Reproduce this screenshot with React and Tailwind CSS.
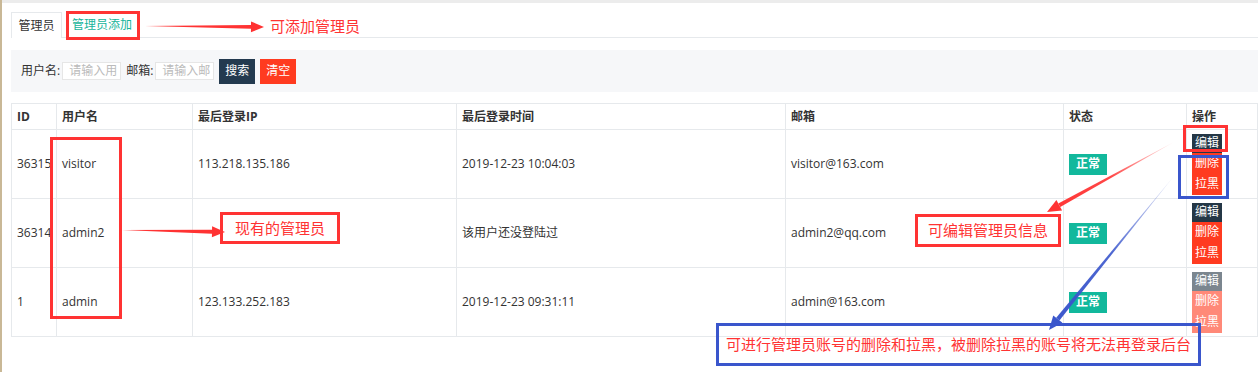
const rows = [
  { id: "36315", name: "visitor", ip: "113.218.135.186", time: "2019-12-23 10:04:03", email: "visitor@163.com", off: false },
  { id: "36314", name: "admin2", ip: "", time: "该用户还没登陆过", email: "admin2@qq.com", off: false },
  { id: "1", name: "admin", ip: "123.133.252.183", time: "2019-12-23 09:31:11", email: "admin@163.com", off: true },
];

const Arrow = ({ x1, y1, x2, y2, color, head = 12, fade }) => {
  const a = Math.atan2(y2 - y1, x2 - x1);
  const bx = x2 - head * Math.cos(a);
  const by = y2 - head * Math.sin(a);
  const w = head * 0.42;
  const px = -Math.sin(a) * w;
  const py = Math.cos(a) * w;
  const id = `g${x1}${y1}`;
  return (
    <g>
      {fade && (
        <defs>
          <linearGradient id={id} gradientUnits="userSpaceOnUse" x1={x1} y1={y1} x2={x2} y2={y2}>
            <stop offset="0" stopColor={color} stopOpacity="0.1" />
            <stop offset="0.5" stopColor={color} stopOpacity="0.9" />
            <stop offset="1" stopColor={color} />
          </linearGradient>
        </defs>
      )}
      <polygon
        points={`${x1},${y1} ${bx + px * 0.35},${by + py * 0.35} ${bx - px * 0.35},${by - py * 0.35}`}
        fill={fade ? `url(#${id})` : color}
      />
      <polygon points={`${x2},${y2} ${bx + px},${by + py} ${bx - px},${by - py}`} fill={color} />
    </g>
  );
};

const Th = ({ children }) => (
  <th className="h-[26px] border border-[#e6e9ec] px-[5px] text-left text-[12px] font-bold text-[#333]">
    {children}
  </th>
);

const Td = ({ children }) => (
  <td className="h-[69px] border border-[#e6e9ec] px-[5px] text-[12px] text-[#333]">{children}</td>
);

export default function App() {
  return (
    <div className="relative h-[372px] w-[1258px] overflow-hidden border-l-2 border-[#c9b896] bg-white font-['Open_Sans','Noto_Sans_CJK_SC',sans-serif] text-[#333]">
      <div className="h-[3px] bg-[#ececec]" />
      <div className="pl-[9px] pt-[9px]">
        <div className="flex h-[26px] border-b border-[#e6e9ec]">
          <div className="-mb-px flex w-[51px] items-center justify-center border border-b-0 border-[#e6e9ec] bg-white text-[12px]">
            管理员
          </div>
          <div className="flex items-center px-[10px] text-[12px] text-[#16b49a]">管理员添加</div>
        </div>

        <div className="mt-[12px] flex h-[42px] items-center bg-[#f6f7f9] pl-[10px] text-[12px]">
          <span>用户名:</span>
          <div className="ml-[2px] flex h-[18px] w-[59px] items-center border border-[#e6e6e6] bg-white pl-[6px] text-[12px] text-[#bbb]">
            请输入用
          </div>
          <span className="ml-[5px]">邮箱:</span>
          <div className="ml-[2px] flex h-[18px] w-[59px] items-center border border-[#e6e6e6] bg-white pl-[6px] text-[12px] text-[#bbb]">
            请输入邮
          </div>
          <div className="ml-[5px] flex h-[25px] w-[36px] items-center justify-center bg-[#233a4f] text-[12px] text-white">
            搜索
          </div>
          <div className="ml-[5px] flex h-[25px] w-[36px] items-center justify-center bg-[#ff3b20] text-[12px] text-white">
            清空
          </div>
        </div>

        <table className="mt-[11px] w-[1246px] table-fixed border-collapse">
          <colgroup>
            <col className="w-[45px]" />
            <col className="w-[136px]" />
            <col className="w-[264px]" />
            <col className="w-[329px]" />
            <col className="w-[278px]" />
            <col className="w-[123px]" />
            <col className="w-[71px]" />
          </colgroup>
          <thead>
            <tr>
              <Th>ID</Th>
              <Th>用户名</Th>
              <Th>最后登录IP</Th>
              <Th>最后登录时间</Th>
              <Th>邮箱</Th>
              <Th>状态</Th>
              <Th>操作</Th>
            </tr>
          </thead>
          <tbody>
            {rows.map((r) => (
              <tr key={r.id}>
                <Td>
                  <span className="whitespace-nowrap">{r.id}</span>
                </Td>
                <Td>{r.name}</Td>
                <Td>{r.ip}</Td>
                <Td>{r.time}</Td>
                <Td>{r.email}</Td>
                <Td>
                  <span className="inline-flex h-[21px] w-[38px] items-center justify-center bg-[#12b89c] text-[12px] font-bold text-white">
                    正常
                  </span>
                </Td>
                <Td>
                  <div className={`flex w-[30px] flex-col text-[12px] text-white ${r.off ? "opacity-60" : ""}`}>
                    <span className="flex h-[19px] items-center justify-center bg-[#243746]">编辑</span>
                    <span className="flex h-[21px] items-center justify-center bg-[#ff3b20]">删除</span>
                    <span className="flex h-[21px] items-center justify-center bg-[#ff3b20]">拉黑</span>
                  </div>
                </Td>
              </tr>
            ))}
          </tbody>
        </table>
      </div>

      {/* annotations */}
      <div className="absolute left-[64px] top-[11px] h-[29px] w-[74px] border-[3px] border-[#f33]" />
      <div className="absolute left-[268px] top-[15px] text-[15px] text-[#f33]">可添加管理员</div>

      <div className="absolute left-[48px] top-[137px] h-[182px] w-[72px] border-[3px] border-[#f33]" />
      <div className="absolute left-[218px] top-[212px] flex h-[32px] w-[120px] items-center justify-center border-[3px] border-[#f33] text-[15px] text-[#f33]">
        现有的管理员
      </div>

      <div className="absolute left-[913px] top-[214px] flex h-[33px] w-[146px] items-center justify-center border-[3px] border-[#f33] text-[15px] text-[#f33]">
        可编辑管理员信息
      </div>

      <div className="absolute left-[1181px] top-[125px] h-[27px] w-[45px] border-[3px] border-[#f33]" />
      <div className="absolute left-[1176px] top-[155px] h-[44px] w-[51px] border-[3px] border-[#3a56cc]" />

      <div className="absolute left-[714px] top-[323px] flex h-[43px] w-[485px] items-center justify-center border-[3px] border-[#3a56cc] text-[15px] text-[#f33]">
        可进行管理员账号的删除和拉黑，被删除拉黑的账号将无法再登录后台
      </div>

      <svg className="pointer-events-none absolute left-0 top-0" width="1258" height="372">
        <Arrow x1={143} y1={26} x2={262} y2={27} color="#f33" head={13} />
        <Arrow x1={120} y1={230} x2={223} y2={232} color="#f33" head={13} />
        <Arrow x1={1172} y1={142} x2={1045} y2={212} color="#f33" head={14} fade />
        <Arrow x1={1172} y1={176} x2={1047} y2={330} color="#3a56cc" head={14} fade />
      </svg>
    </div>
  );
}
